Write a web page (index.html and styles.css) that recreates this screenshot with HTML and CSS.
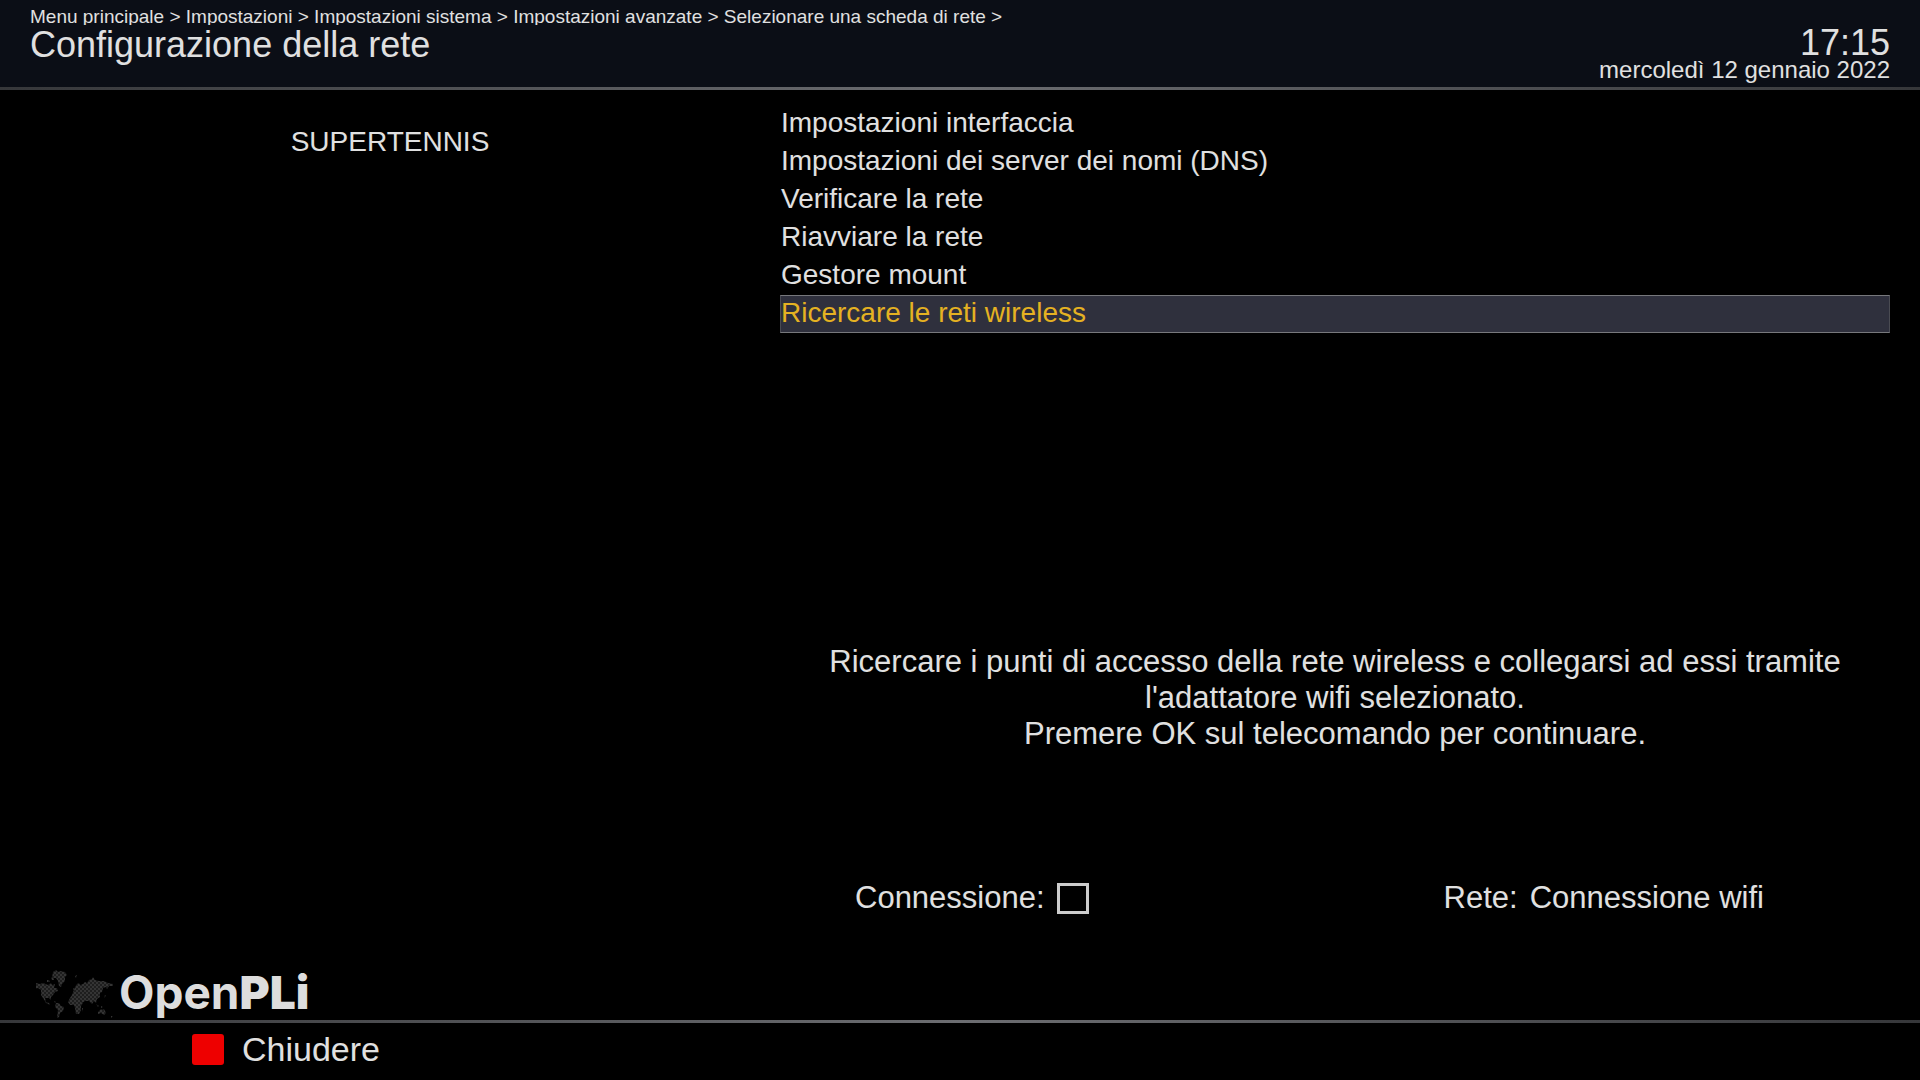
FILE: index.html
```html
<!DOCTYPE html>
<html lang="it">
<head>
    <meta charset="UTF-8">
    <meta name="viewport" content="width=device-width, initial-scale=1.0">
    <title>Configurazione della rete</title>
    <link rel="stylesheet" href="styles.css">
</head>
<body>
    <header class="header">
        <div class="heading">
            <p class="breadcrumb">Menu principale &gt; Impostazioni &gt; Impostazioni sistema &gt; Impostazioni avanzate &gt; Selezionare una scheda di rete &gt;</p>
            <h1 class="title">Configurazione della rete</h1>
        </div>
        <div class="datetime">
            <time class="clock">17:15</time>
            <time class="date">mercoledì 12 gennaio 2022</time>
        </div>
    </header>
    <main class="content">
        <aside class="sidebar">
            <p class="channel">SUPERTENNIS</p>
        </aside>
        <section class="panel">
            <div class="menu">
                <button class="menu-item">Impostazioni interfaccia</button>
                <button class="menu-item">Impostazioni dei server dei nomi (DNS)</button>
                <button class="menu-item">Verificare la rete</button>
                <button class="menu-item">Riavviare la rete</button>
                <button class="menu-item">Gestore mount</button>
                <button class="menu-item selected">Ricercare le reti wireless</button>
            </div>
            <p class="description">Ricercare i punti di accesso della rete wireless e collegarsi ad essi tramite l'adattatore wifi selezionato.<br>Premere OK sul telecomando per continuare.</p>
            <div class="status">
                <div class="status-item">
                    <label for="connected">Connessione:</label>
                    <input class="checkbox" type="checkbox" id="connected">
                </div>
                <div class="status-item">
                    <span>Rete:</span>
                    <span>Connessione wifi</span>
                </div>
            </div>
        </section>
    </main>
    <div class="logo">
        <svg class="map" viewBox="0 0 80 50" aria-hidden="true">
            <defs>
                <pattern id="dots" width="4" height="4" patternUnits="userSpaceOnUse">
                    <rect width="4" height="4" fill="#1e1e1e"/>
                    <rect width="2" height="2" fill="#343434"/>
                    <rect x="2" y="2" width="2" height="2" fill="#343434"/>
                </pattern>
            </defs>
            <g fill="url(#dots)">
                <!-- Americas -->
                <path d="M0 13l4 1 3-1 5 2 3-2 1 2 3-1-1 4 3 0 1 3-3 1-2 3-2 2 0 3-2-2-4 0 1 4 3 1 1 2-4-2-3-5-2-3 0-5-3-2-4 1-1 2z"/>
                <path d="M17 2l3-2 2 2 2-1 5 1 2 3-2 2 0 4-3 3-1 3-2-1-1-5-2-3-4 0z"/>
                <path d="M15 8l2-1 1 3-2 0zM11 10l2 0 1 2-3 0zM18 31l2 1-1 1z"/>
                <path d="M20 33l3 0 2 3 3 1-1 4-3 2-1 4-2 1 1-8-3-3z"/>
                <!-- Africa -->
                <path d="M34 28l4-1 2 1 4 0 1 4 2 1-2 3 0 4-2 4-3 0-1-6-1-3-4 0-2-3z"/>
                <!-- Europe and Asia -->
                <path d="M39 17l2-3 2-1 1 2 3-1 2-2 2 1 2-3 3-1 1-2 2 3 4 1 5 0 4 2 5 1 0 2-4 0-2 3-1-2-3 1-1 4-2 1 0 4-3 2-1 4-2-2-2 3-3-3-4 0-3 2-2-4-5-1-3 2-2-2 2-3z"/>
                <!-- Oceania and islands -->
                <path d="M62 42l3-3 2 1 1-1 2 4-2 2-3-2-3 1zM60 34l3 2-1 1zM65 36l2 1-2 1zM39 6l2-1-1 3zM46 38l1 0-1 4zM75 46l2 0-2 2zM37 18l1 0 0 2-1 0zM68 28l1-3 1 1z"/>
            </g>
        </svg>
        <span class="wordmark">Open<b class="wordmark-heavy">PLi</b></span>
    </div>
    <footer class="footer">
        <button class="color-button"><span class="red-key"></span>Chiudere</button>
    </footer>
</body>
</html>
```
FILE: styles.css
```css
* {
    box-sizing: border-box;
}
body {
    margin: 0;
    min-height: 100vh;
    display: flex;
    flex-direction: column;
    background-color: #000000;
    color: #e0e0e0;
    font-family: "Liberation Sans", Arial, sans-serif;
}
p,
h1 {
    margin: 0;
    font-weight: 400;
}
button {
    padding: 0;
    border: 0;
    background: none;
    color: inherit;
    font-family: inherit;
    text-align: left;
    cursor: pointer;
}
.header {
    display: flex;
    justify-content: space-between;
    height: 90px;
    padding: 0 30px;
    background-color: #0b0e16;
    border-bottom: 3px solid;
    border-image: linear-gradient(to right, #36373a, #6c6d71 50%, #36373a) 1;
}
.breadcrumb {
    height: 25px;
    padding-top: 6px;
    font-size: 19px;
    line-height: 22px;
    overflow: hidden;
}
.title {
    font-size: 36px;
    line-height: 40px;
}
.datetime {
    display: flex;
    flex-direction: column;
    align-items: flex-end;
    padding-top: 27px;
}
.clock {
    font-size: 36px;
    line-height: 32px;
}
.date {
    font-size: 24px;
    line-height: 22px;
}
.content {
    flex: 1;
    display: flex;
    padding: 0 30px;
}
.sidebar {
    width: 720px;
    padding-top: 36px;
    text-align: center;
}
.channel {
    font-size: 28px;
    line-height: 32px;
}
.panel {
    flex: 1;
    padding: 15px 0 0 30px;
}
.menu {
    display: flex;
    flex-direction: column;
}
.menu-item {
    height: 38px;
    padding: 0 1px 2px;
    font-size: 28px;
    line-height: 34px;
}
.selected {
    border: 1px solid #77787c;
    border-left-color: #4a4b52;
    border-right-color: #4a4b52;
    padding: 0 0 2px;
    background-color: #2f303d;
    color: #e5b222;
}
.description {
    margin-top: 311px;
    font-size: 31px;
    line-height: 36px;
    text-align: center;
}
.status {
    display: flex;
    justify-content: space-between;
    padding: 128px 126px 0 75px;
    font-size: 31px;
    line-height: 36px;
}
.status-item {
    display: flex;
    align-items: center;
    gap: 12px;
}
.checkbox {
    appearance: none;
    width: 32px;
    height: 31px;
    margin: 0;
    border: 3px solid #cccccc;
}
.logo {
    display: flex;
    align-items: flex-start;
    gap: 3px;
    padding: 0 36px;
}
.map {
    width: 80px;
    height: 50px;
}
.wordmark {
    color: #dddddd;
    font-family: Inter, sans-serif;
    font-size: 46px;
    font-weight: 700;
    line-height: 44px;
}
.wordmark-heavy {
    font-weight: 900;
}
.footer {
    height: 60px;
    padding: 6px 192px;
    border-top: 3px solid;
    border-image: linear-gradient(to right, #36373a, #6c6d71 50%, #36373a) 1;
}
.color-button {
    display: flex;
    align-items: center;
    gap: 18px;
    font-size: 34px;
    line-height: 40px;
}
.red-key {
    width: 32px;
    height: 31px;
    border-radius: 3px;
    background-color: #ee0000;
}
```
